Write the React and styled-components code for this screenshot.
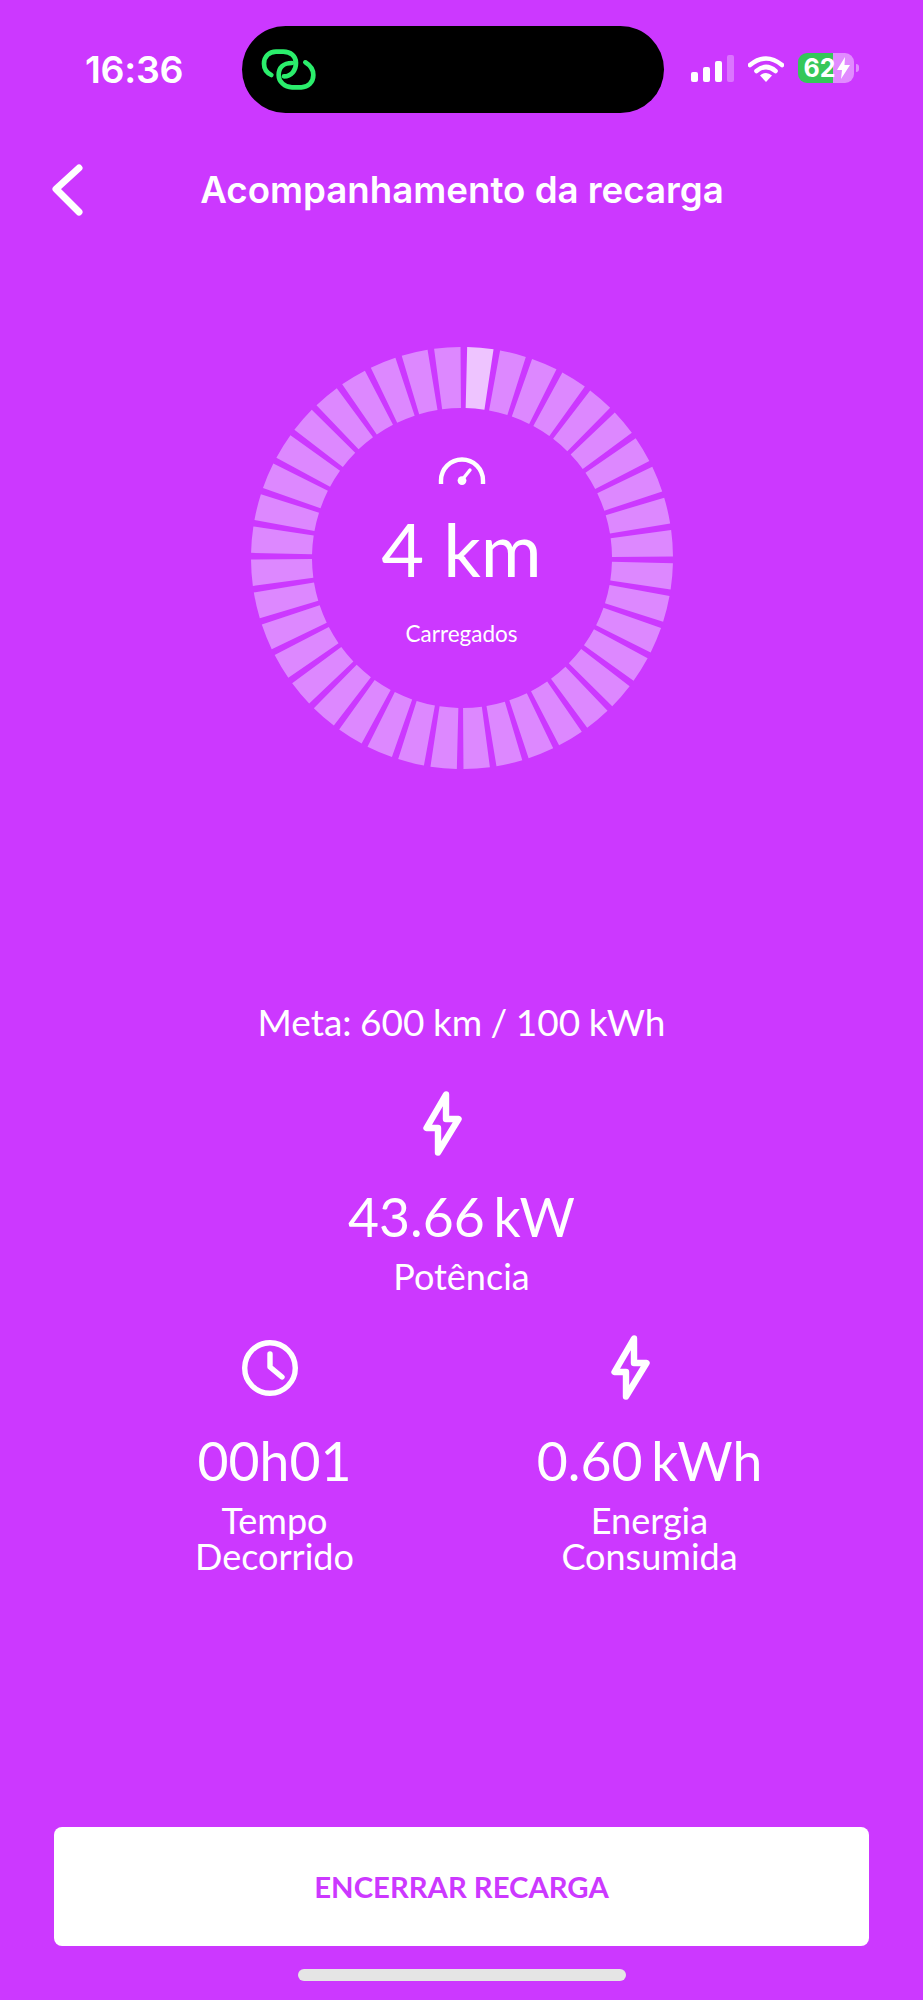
import React from "react"
import styled, { createGlobalStyle } from "styled-components"

const BG = "#cc38ff"

const GlobalStyle = createGlobalStyle`
  html, body {
    margin: 0;
    padding: 0;
    background: ${BG};
  }
`

const Page = styled.div`
  width: 923px;
  height: 2000px;
  background: ${BG};
  color: #fff;
  font-family: "Lato", "Liberation Sans", sans-serif;
  display: flex;
  flex-direction: column;
  overflow: hidden;
`

const StatusBar = styled.div`
  display: grid;
  grid-template-columns: 242px 422px 1fr;
  align-items: center;
  padding-top: 26px;
`

const Time = styled.div`
  padding-left: 85px;
  font-family: "Inter", sans-serif;
  font-size: 37.5px;
  font-weight: 600;
  line-height: 44px;
  letter-spacing: -0.3px;
`

const Island = styled.div`
  height: 87px;
  border-radius: 44px;
  background: #000;
  display: flex;
  align-items: center;
  padding-left: 18px;
`

const StatusIcons = styled.div`
  display: flex;
  align-items: center;
  padding-left: 27px;
  margin-top: -3px;
`

const SignalBars = styled.div`
  display: flex;
  align-items: flex-end;
  gap: 5.5px;
  height: 27px;
  margin-right: 14px;
`

const SignalBar = styled.span`
  width: 6.5px;
  height: ${(p) => p.$h}px;
  border-radius: 2px;
  background: ${(p) => (p.$off ? "rgba(255,255,255,0.3)" : "#fff")};
`

const Battery = styled.div`
  width: 56px;
  height: 30px;
  margin-left: 14px;
  border-radius: 9px;
  overflow: hidden;
  display: flex;
  align-items: center;
  gap: 2px;
  padding-left: 6px;
  box-sizing: border-box;
  background: linear-gradient(
    to right,
    #35c759 ${(p) => p.$level}%,
    rgba(255, 255, 255, 0.42) ${(p) => p.$level}%
  );
  font-family: "Inter", sans-serif;
  font-size: 25px;
  font-weight: 700;
  line-height: 30px;
`

const BatteryNub = styled.span`
  width: 3px;
  height: 8px;
  margin-left: 2px;
  border-radius: 0 3px 3px 0;
  background: rgba(255, 255, 255, 0.42);
`

const Header = styled.div`
  display: grid;
  grid-template-columns: 1fr auto 1fr;
  align-items: center;
  margin-top: 51px;
  height: 50px;
  padding-left: 51px;
  padding-right: 50px;
`

const Title = styled.div`
  font-family: "Inter", sans-serif;
  font-size: 36.7px;
  font-weight: 600;
  line-height: 50px;
  white-space: nowrap;
`

const RingWrap = styled.div`
  display: grid;
  width: 424px;
  height: 424px;
  margin: 132px auto 0;
  & > * {
    grid-area: 1 / 1;
  }
`

const RingCenter = styled.div`
  display: flex;
  flex-direction: column;
  align-items: center;
  padding-top: 110px;
`

const Distance = styled.div`
  font-size: 74px;
  line-height: 80px;
  margin-top: 23px;
`

const DistanceLabel = styled.div`
  font-size: 22.5px;
  line-height: 26px;
  margin-top: 32px;
`

const Stats = styled.div`
  display: flex;
  flex-direction: column;
  align-items: center;
  margin-top: 230px;
`

const Goal = styled.div`
  font-size: 37px;
  line-height: 44px;
  word-spacing: -1px;
`

const Stat = styled.div`
  display: flex;
  flex-direction: column;
  align-items: center;
  margin-top: ${(p) => p.$top || 0}px;
`

const IconSlot = styled.div`
  height: 65px;
  display: flex;
  align-items: center;
  margin-right: ${(p) => p.$shift}px;
`

const StatValue = styled.div`
  font-size: 53.5px;
  line-height: 60px;
  margin-top: 30px;
  word-spacing: -5px;
`

const StatLabel = styled.div`
  font-size: 36px;
  line-height: 36px;
  margin-top: 12px;
  text-align: center;
`

const StatRow = styled.div`
  display: grid;
  grid-template-columns: 375px 375px;
  width: 750px;
  margin-top: 41px;
  padding-left: 1px;
`

const Spacer = styled.div`
  flex: 1;
`

const EndButton = styled.button`
  display: block;
  width: 815px;
  height: 119px;
  margin: 0 auto;
  border: 0;
  border-radius: 8px;
  background: #fff;
  color: ${BG};
  font-family: "Lato", sans-serif;
  font-size: 29.3px;
  font-weight: 700;
  line-height: 119px;
  padding: 0;
`

const HomeBar = styled.div`
  width: 328px;
  height: 12px;
  margin: 23px auto 19px;
  border-radius: 6px;
  background: #e5e5e5;
`

// 40 segmentos em volta do anel
const sector = (i) => {
  const cx = 212
  const cy = 212
  const ro = 211
  const ri = 150
  const rad = (d) => ((d - 90) * Math.PI) / 180
  const a0 = rad(i * 9 + 1.4)
  const a1 = rad(i * 9 + 8.6)
  const pt = (r, a) => `${(cx + r * Math.cos(a)).toFixed(2)} ${(cy + r * Math.sin(a)).toFixed(2)}`
  return `M${pt(ro, a0)} A${ro} ${ro} 0 0 1 ${pt(ro, a1)} L${pt(ri, a1)} A${ri} ${ri} 0 0 0 ${pt(ri, a0)} Z`
}

const Ring = () => (
  <svg width="424" height="424" viewBox="0 0 424 424">
    {Array.from({ length: 40 }).map((_, i) => (
      <path key={i} d={sector(i)} fill={i === 0 ? "#eec4ff" : "#dd88ff"} />
    ))}
  </svg>
)

const LinkLogo = () => (
  <svg width="58" height="44" viewBox="90 85 174 132" fill="none" stroke="#2bee6c" strokeWidth="14" strokeLinecap="round">
    <path d="M124 166 C108 158 102 145 102 132 C102 110 118 96 138 96 L160 96 C182 96 198 110 198 130 C198 152 184 170 162 170" />
    <path d="M226 128 C242 138 250 152 250 166 C250 188 234 203 214 203 L186 203 C164 203 146 186 146 166 C146 144 160 130 186 130" />
  </svg>
)

const WifiIcon = () => (
  <svg width="36" height="27" viewBox="0 0 36 27" fill="none">
    <path d="M2 10 Q18 -3 34 10" stroke="#fff" strokeWidth="4.6" strokeLinecap="round" />
    <path d="M8.5 16 Q18 8 27.5 16" stroke="#fff" strokeWidth="4.6" strokeLinecap="round" />
    <path d="M18 27 L12 20.5 Q18 15.5 24 20.5 Z" fill="#fff" />
  </svg>
)

const ChargeBolt = () => (
  <svg width="13" height="22" viewBox="0 0 13 22">
    <path d="M8 0 L0 13 H5 L4 22 L13 8 H7.5 Z" fill="#fff" />
  </svg>
)

const BackIcon = () => (
  <svg width="32" height="52" viewBox="0 0 32 52" fill="none" stroke="#fff" strokeWidth="7" strokeLinecap="round" strokeLinejoin="round">
    <path d="M28 4 L5 25 L28 48" />
  </svg>
)

const GaugeIcon = () => (
  <svg width="48" height="30" viewBox="0 0 48 30" fill="none" stroke="#fff">
    <path d="M3 28 V24.5 A21 21 0 0 1 45 24.5 V28" strokeWidth="4.4" />
    <path d="M24 24 L32 14" strokeWidth="3.4" strokeLinecap="round" />
    <circle cx="24" cy="24.6" r="4.4" fill="#fff" stroke="none" />
  </svg>
)

const BoltIcon = () => (
  <svg width="39" height="65" viewBox="0 0 39 65" fill="none" stroke="#fff" strokeWidth="6.4" strokeLinejoin="round">
    <path d="M23 3.5 L3.5 37 H15 V61.5 L35.5 28 H23 Z" />
  </svg>
)

const ClockIcon = () => (
  <svg width="56" height="56" viewBox="0 0 56 56" fill="none" stroke="#fff" strokeWidth="5.4" strokeLinecap="round" strokeLinejoin="round">
    <circle cx="28" cy="28" r="25.3" />
    <path d="M28 14 V27 L40 37" />
  </svg>
)

const App = () => {
  return (
    <Page>
      <GlobalStyle />
      <StatusBar>
        <Time>16:36</Time>
        <Island>
          <LinkLogo />
        </Island>
        <StatusIcons>
          <SignalBars>
            <SignalBar $h={10} />
            <SignalBar $h={15} />
            <SignalBar $h={21} />
            <SignalBar $h={27} $off />
          </SignalBars>
          <WifiIcon />
          <Battery $level={62}>
            <span>62</span>
            <ChargeBolt />
          </Battery>
          <BatteryNub />
        </StatusIcons>
      </StatusBar>

      <Header>
        <BackIcon />
        <Title>Acompanhamento da recarga</Title>
      </Header>

      <RingWrap>
        <Ring />
        <RingCenter>
          <GaugeIcon />
          <Distance>4 km</Distance>
          <DistanceLabel>Carregados</DistanceLabel>
        </RingCenter>
      </RingWrap>

      <Stats>
        <Goal>Meta: 600 km / 100 kWh</Goal>
        <Stat $top={47}>
          <IconSlot $shift={38}>
            <BoltIcon />
          </IconSlot>
          <StatValue>43.66 kW</StatValue>
          <StatLabel>Potência</StatLabel>
        </Stat>
        <StatRow>
          <Stat>
            <IconSlot $shift={10}>
              <ClockIcon />
            </IconSlot>
            <StatValue>00h01</StatValue>
            <StatLabel>Tempo<br />Decorrido</StatLabel>
          </Stat>
          <Stat>
            <IconSlot $shift={38}>
              <BoltIcon />
            </IconSlot>
            <StatValue>0.60 kWh</StatValue>
            <StatLabel>Energia<br />Consumida</StatLabel>
          </Stat>
        </StatRow>
      </Stats>

      <Spacer />
      <EndButton>ENCERRAR RECARGA</EndButton>
      <HomeBar />
    </Page>
  )
}

export default App
